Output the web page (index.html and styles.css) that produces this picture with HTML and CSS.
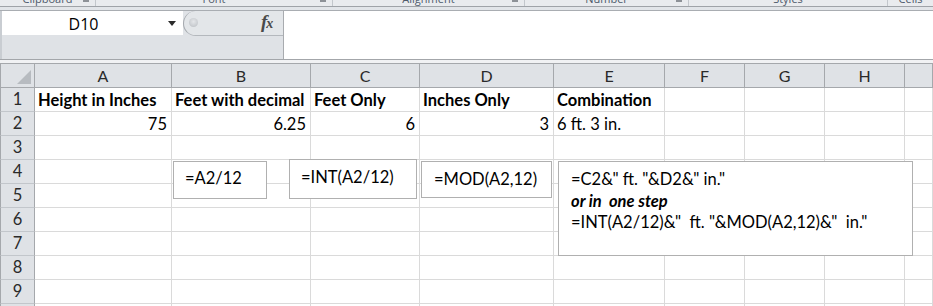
FILE: index.html
```html
<!DOCTYPE html>
<html>
<head>
<meta charset="utf-8">
<title>Excel - feet and inches</title>
<link rel="stylesheet" href="styles.css">
</head>
<body>
<div class="app">
  <div class="ribbon">
    <div class="group g-clip"><span class="glabel">Clipboard</span><span class="launcher"></span></div>
    <div class="group g-font"><span class="glabel">Font</span><span class="launcher"></span></div>
    <div class="group g-align"><span class="glabel">Alignment</span><span class="launcher"></span></div>
    <div class="group g-num"><span class="glabel">Number</span><span class="launcher"></span></div>
    <div class="group g-styles"><span class="glabel">Styles</span></div>
    <div class="group g-cells"><span class="glabel">Cells</span></div>
  </div>
  <div class="ribbon-edge"></div>
  <div class="fbar">
    <div class="namecol">
      <div class="namebox"><span class="nametext">D10</span><span class="ddarrow"></span></div>
    </div>
    <div class="fxcol">
      <div class="capsule"><span class="knob"></span><span class="fx">f<span class="fxx">x</span></span></div>
    </div>
    <div class="finput"></div>
  </div>
  <div class="fbar-edge"></div>

  <div class="sheet">
    <div class="grid">
      <div class="corner"><span class="corner-tri"></span></div>
      <div class="ch">A</div><div class="ch">B</div><div class="ch">C</div><div class="ch">D</div><div class="ch">E</div><div class="ch">F</div><div class="ch">G</div><div class="ch">H</div><div class="ch ch-last"></div>

      <div class="rh">1</div>
      <div class="c b">Height in Inches</div><div class="c b">Feet with decimal</div><div class="c b">Feet Only</div><div class="c b">Inches Only</div><div class="c b">Combination</div><div class="c"></div><div class="c"></div><div class="c"></div><div class="c"></div>

      <div class="rh">2</div>
      <div class="c r">75</div><div class="c r">6.25</div><div class="c r">6</div><div class="c r">3</div><div class="c">6 ft. 3 in.</div><div class="c"></div><div class="c"></div><div class="c"></div><div class="c"></div>

      <div class="rh">3</div>
      <div class="c"></div><div class="c"></div><div class="c"></div><div class="c"></div><div class="c"></div><div class="c"></div><div class="c"></div><div class="c"></div><div class="c"></div>
      <div class="rh">4</div>
      <div class="c"></div><div class="c"></div><div class="c"></div><div class="c"></div><div class="c"></div><div class="c"></div><div class="c"></div><div class="c"></div><div class="c"></div>
      <div class="rh">5</div>
      <div class="c"></div><div class="c"></div><div class="c"></div><div class="c"></div><div class="c"></div><div class="c"></div><div class="c"></div><div class="c"></div><div class="c"></div>
      <div class="rh">6</div>
      <div class="c"></div><div class="c"></div><div class="c"></div><div class="c"></div><div class="c"></div><div class="c"></div><div class="c"></div><div class="c"></div><div class="c"></div>
      <div class="rh">7</div>
      <div class="c"></div><div class="c"></div><div class="c"></div><div class="c"></div><div class="c"></div><div class="c"></div><div class="c"></div><div class="c"></div><div class="c"></div>
      <div class="rh">8</div>
      <div class="c"></div><div class="c"></div><div class="c"></div><div class="c"></div><div class="c"></div><div class="c"></div><div class="c"></div><div class="c"></div><div class="c"></div>
      <div class="rh">9</div>
      <div class="c"></div><div class="c"></div><div class="c"></div><div class="c"></div><div class="c"></div><div class="c"></div><div class="c"></div><div class="c"></div><div class="c"></div>
      <div class="rh rh-cut"></div>
      <div class="c"></div><div class="c"></div><div class="c"></div><div class="c"></div><div class="c"></div><div class="c"></div><div class="c"></div><div class="c"></div><div class="c"></div>
    </div>

    <div class="tbox tb1">=A2/12</div>
    <div class="tbox tb2">=INT(A2/12)</div>
    <div class="tbox tb3">=MOD(A2,12)</div>
    <div class="tbox tb4">
      <div class="tline">=C2&amp;" ft. "&amp;D2&amp;" in."</div>
      <div class="tline bi">or in&nbsp; one step</div>
      <div class="tline">=INT(A2/12)&amp;"&nbsp; ft. "&amp;MOD(A2,12)&amp;"&nbsp; in."</div>
    </div>
  </div>
</div>
</body>
</html>
```

FILE: styles.css
```css
* { box-sizing: border-box; }
html, body { margin: 0; padding: 0; }
body {
  width: 933px;
  height: 306px;
  overflow: hidden;
  background: #ffffff;
  font-family: "Lato", "Liberation Sans", sans-serif;
  color: #000;
}
.app { width: 933px; height: 306px; overflow: hidden; }

/* ribbon strip (cut off at the top of the shot) */
.ribbon {
  display: flex;
  height: 6px;
  background: #e9ebee;
  overflow: hidden;
}
.group {
  position: relative;
  height: 6px;
  border-right: 1px solid #c3c7cc;
  display: flex;
  justify-content: center;
  overflow: hidden;
}
.g-clip { width: 96px; }
.g-font { width: 237px; }
.g-align { width: 192px; }
.g-num { width: 164px; }
.g-styles { width: 199px; }
.g-cells { flex: 1; border-right: none; }
.glabel {
  font-family: "Open Sans", "Liberation Sans", sans-serif;
  font-size: 11px;
  line-height: 11px;
  margin-top: -7px;
  color: #4d5a6b;
  white-space: nowrap;
}
.launcher {
  position: absolute;
  right: 6px;
  top: 0;
  width: 6px;
  height: 2px;
  background: #8d9197;
}
.ribbon-edge {
  height: 5px;
  border-top: 1px solid #9fa3a8;
  border-bottom: 1px solid #a9adb2;
  background: #e2e5e9;
}

/* formula bar */
.fbar {
  display: flex;
  height: 48px;
  background: #ffffff;
}
.namecol {
  width: 183px;
  background: #dfe2e6;
  border-left: 2px solid #c9cdd2;
}
.namebox {
  position: relative;
  height: 24px;
  background: #ffffff;
  display: flex;
  align-items: center;
  justify-content: center;
}
.nametext {
  font-family: "Open Sans", "Noto Sans", sans-serif;
  font-size: 16px;
  color: #000;
  margin-left: -18px;
  margin-top: 1px;
}
.ddarrow {
  position: absolute;
  left: 166px;
  top: 10px;
  width: 0;
  height: 0;
  border-left: 4px solid transparent;
  border-right: 4px solid transparent;
  border-top: 5px solid #2b2b2b;
}
.fxcol {
  width: 101px;
  background: #dfe2e6;
  border-right: 1px solid #a8abaf;
}
.capsule {
  position: relative;
  height: 25px;
  border-left: 1px solid #a4a8ad;
  border-bottom: 1px solid #b4b8bd;
  border-top-left-radius: 13px;
  border-bottom-left-radius: 13px;
  background: #e3e6e9;
}
.knob {
  position: absolute;
  left: 5px;
  top: 7px;
  width: 9px;
  height: 9px;
  border-radius: 50%;
  background: radial-gradient(circle at 50% 40%, #e4e6e9 0, #cdd0d4 55%, #b5b9be 100%);
}
.fx {
  position: absolute;
  left: 77px;
  top: 0px;
  font-family: "Liberation Serif", "DejaVu Serif", serif;
  font-style: italic;
  font-weight: 700;
  font-size: 19px;
  color: #4a4a4a;
  letter-spacing: -1px;
}
.fxx { font-size: 14px; }
.finput { flex: 1; background: #ffffff; }
.fbar-edge {
  height: 4px;
  border-top: 1px solid #a3a6aa;
  background: #f1f2f4;
}

/* sheet */
.sheet { position: relative; }
.grid {
  display: grid;
  grid-template-columns: 35px 137px 139px 109px 134px 111px 80px 80px 80px 28px;
  grid-template-rows: 25px repeat(10, 24px);
}
.corner {
  position: relative;
  background: #dfe2e6;
  border: 1px solid #a5a8ac;
  overflow: hidden;
}
.corner-tri {
  position: absolute;
  right: 3px;
  bottom: 3px;
  width: 0;
  height: 0;
  border-left: 14px solid transparent;
  border-bottom: 14px solid #b7bbc0;
}
.ch {
  background: #dfe2e6;
  border-top: 1px solid #a5a8ac;
  border-right: 1px solid #a5a8ac;
  border-bottom: 1px solid #a5a8ac;
  text-align: center;
  font-size: 16px;
  line-height: 23px;
  color: #2a2a2a;
}
.rh {
  background: #dfe2e6;
  border-left: 1px solid #a5a8ac;
  border-right: 1px solid #a5a8ac;
  border-bottom: 1px solid #c2c6cb;
  text-align: center;
  font-size: 16.5px;
  line-height: 23px;
  color: #2a2a2a;
}
.c {
  border-right: 1px solid #dadada;
  border-bottom: 1px solid #dadada;
  font-size: 16.5px;
  line-height: 24px;
  padding: 0 4px 0 3px;
  white-space: nowrap;
  overflow: visible;
}
.c.b { font-weight: 700; }
.c.r { text-align: right; }

/* text boxes (floating shapes) */
.tbox {
  position: absolute;
  background: #ffffff;
  border: 1px solid #b0b0b0;
  font-size: 16.5px;
  line-height: 20px;
  padding-left: 11px;
  white-space: nowrap;
}
.tb1 { left: 173px; top: 98px; width: 94px; height: 38px; padding-top: 6px; }
.tb2 { left: 289px; top: 96px; width: 128px; height: 40px; padding-top: 7px; }
.tb3 { left: 421px; top: 98px; width: 131px; height: 37px; padding-top: 7px; padding-left: 12px; }
.tb4 { left: 558px; top: 98px; width: 355px; height: 95px; padding-top: 7px; padding-left: 12px; }
.tline { line-height: 21.5px; }
.bi { font-weight: 700; font-style: italic; }
```
